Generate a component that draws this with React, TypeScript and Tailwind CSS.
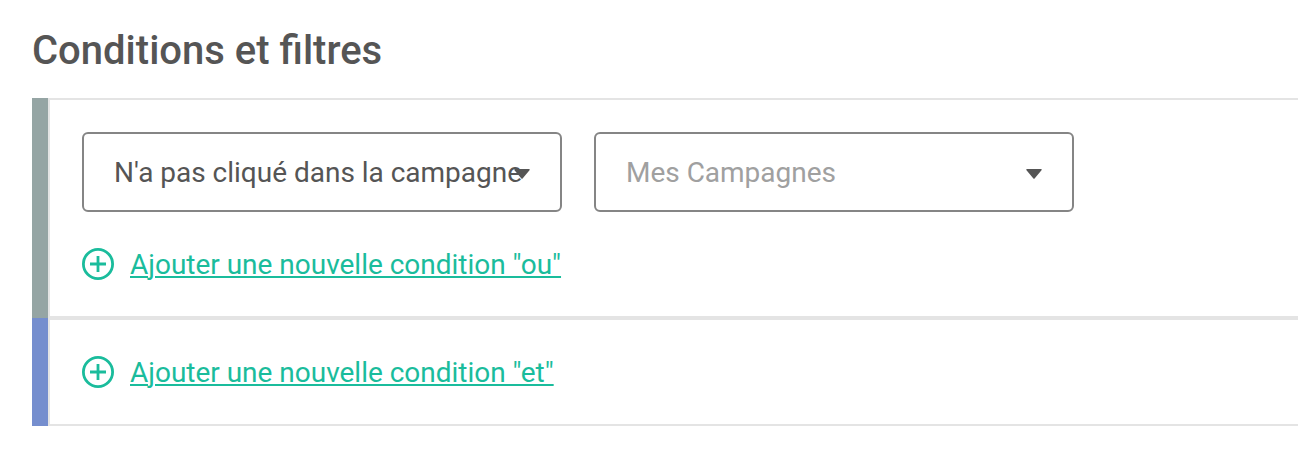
import React from "react";

function Select({ label, muted }: { label: string; muted?: boolean }) {
  return (
    <div className="relative flex h-20 w-[480px] items-center rounded-md border-2 border-[#858585] pl-[30px]">
      <span className={`whitespace-nowrap pt-0.5 text-[28px] leading-8 tracking-[-0.012px] ${muted ? "text-[#a0a0a0]" : "text-[#555555]"}`}>{label}</span>
      <svg className="absolute right-[30px] top-[35px]" width="16" height="10" viewBox="0 0 16 10">
        <path d="M1 0H15Q16.4 0 15.5 1.3L8.8 9.2Q8 10.2 7.2 9.2L0.5 1.3Q-0.4 0 1 0Z" fill="#555555" />
      </svg>
    </div>
  );
}

function AddCondition({ label }: { label: string }) {
  return (
    <button className="flex h-8 items-center gap-4 text-[#1abc9c]">
      <svg width="32" height="32" viewBox="0 0 32 32" fill="none" stroke="currentColor" strokeWidth="2.8">
        <circle cx="16" cy="16" r="14.6" />
        <path d="M16 8V24M8 16H24" />
      </svg>
      <span className="whitespace-nowrap pt-0.5 text-[28px] leading-8 tracking-[-0.015px] underline decoration-2 underline-offset-2">{label}</span>
    </button>
  );
}

export default function App() {
  return (
    <main className="h-[476px] overflow-hidden bg-white pl-8 pt-[27px] font-['Roboto',sans-serif]">
      <h1 className="h-[71px] text-[40px] font-medium leading-[48px] text-[#555555]">Conditions et filtres</h1>
      <section className="flex h-[220px]">
        <div className="w-4 bg-[#95a5a4]" />
        <div className="flex-1 border-y-2 border-l-2 border-[#e4e4e4] pl-8 pt-8">
          <div className="flex gap-8">
            <Select label="N'a pas cliqué dans la campagne" />
            <Select label="Mes Campagnes" muted />
          </div>
          <div className="pt-9">
            <AddCondition label={'Ajouter une nouvelle condition "ou"'} />
          </div>
        </div>
      </section>
      <section className="flex h-[108px]">
        <div className="w-4 bg-[#758ece]" />
        <div className="flex-1 border-y-2 border-l-2 border-[#e4e4e4] pl-8 pt-9">
          <AddCondition label={'Ajouter une nouvelle condition "et"'} />
        </div>
      </section>
    </main>
  );
}
